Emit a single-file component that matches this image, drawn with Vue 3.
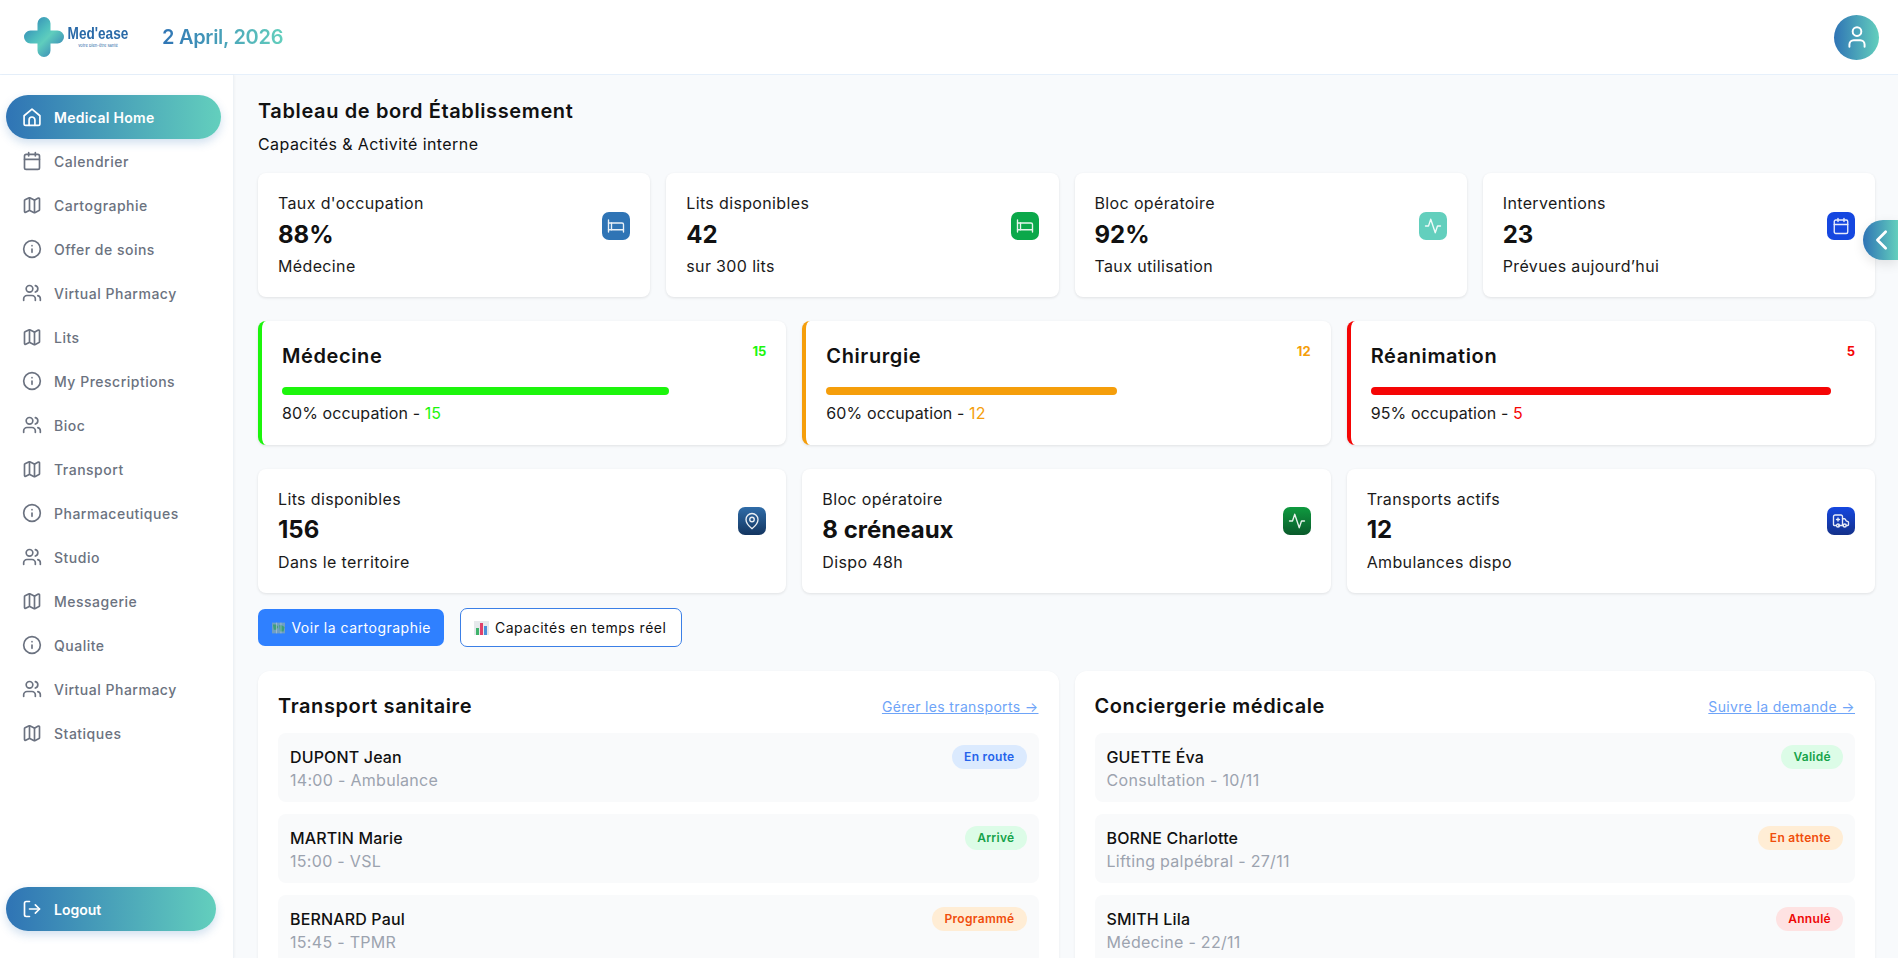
<script setup>
const icons = {
  home: ['M2.5 10.5 12 2.5l9.5 8V20a2 2 0 0 1-2 2h-15a2 2 0 0 1-2-2z', 'M8.5 22v-6.5a3.5 3.5 0 0 1 7 0V22'],
  cal: ['M5 4h14a2 2 0 0 1 2 2v14a2 2 0 0 1-2 2H5a2 2 0 0 1-2-2V6a2 2 0 0 1 2-2z', 'M16 2v4', 'M8 2v4', 'M3 10h18'],
  map: ['M14.1 5.6 9.9 3.5a2 2 0 0 0-1.8 0L3.6 5.7A1 1 0 0 0 3 6.6v13.2a1 1 0 0 0 1.4.9l3.7-1.9a2 2 0 0 1 1.8 0l4.2 2.1a2 2 0 0 0 1.8 0l4.5-2.2a1 1 0 0 0 .6-.9V4.6a1 1 0 0 0-1.4-.9l-3.7 1.9a2 2 0 0 1-1.8 0z', 'M15 5.8v15', 'M9 3.3v15'],
  info: ['M12 2a10 10 0 1 0 0 20 10 10 0 0 0 0-20z', 'M12 16v-4', 'M12 8h.01'],
  users: ['M16 21v-2a4 4 0 0 0-4-4H6a4 4 0 0 0-4 4v2', 'M9 3a4 4 0 1 0 0 8 4 4 0 0 0 0-8z', 'M22 21v-2a4 4 0 0 0-3-3.87', 'M16 3.13a4 4 0 0 1 0 7.75'],
  logout: ['M9 21H5a2 2 0 0 1-2-2V5a2 2 0 0 1 2-2h4', 'M16 17l5-5-5-5', 'M21 12H9'],
  user: ['M19 21v-2a4 4 0 0 0-4-4H9a4 4 0 0 0-4 4v2', 'M12 3a4 4 0 1 0 0 8 4 4 0 0 0 0-8z'],
  bed: ['M2 4v16', 'M2 8h18a2 2 0 0 1 2 2v10', 'M2 17h20', 'M6 8v9'],
  pulse: ['M22 12h-4l-3 9L9 3l-3 9H2'],
  pin: ['M20 10c0 5-5.5 10.2-7.4 11.8a1 1 0 0 1-1.2 0C9.5 20.2 4 15 4 10a8 8 0 0 1 16 0', 'M12 7a3 3 0 1 0 0 6 3 3 0 0 0 0-6z'],
  amb: ['M10 10H6', 'M8 8v4', 'M14 18V6a2 2 0 0 0-2-2H4a2 2 0 0 0-2 2v11a1 1 0 0 0 1 1h2', 'M19 18h2a1 1 0 0 0 1-1v-3.28a1 1 0 0 0-.68-.95l-1.82-.6a1 1 0 0 1-.55-.46L17.6 9.5a1 1 0 0 0-.87-.5H14', 'M8 16a2 2 0 1 0 0 4 2 2 0 0 0 0-4z', 'M17 16a2 2 0 1 0 0 4 2 2 0 0 0 0-4z', 'M9 18h6'],
}
const nav = [
  ['Calendrier', 'cal'], ['Cartographie', 'map'], ['Offer de soins', 'info'], ['Virtual Pharmacy', 'users'],
  ['Lits', 'map'], ['My Prescriptions', 'info'], ['Bioc', 'users'], ['Transport', 'map'],
  ['Pharmaceutiques', 'info'], ['Studio', 'users'], ['Messagerie', 'map'], ['Qualite', 'info'],
  ['Virtual Pharmacy', 'users'], ['Statiques', 'map'],
]
const stats = [
  { label: "Taux d'occupation", value: '88%', sub: 'Médecine', icon: 'bed', cls: 'i-blue' },
  { label: 'Lits disponibles', value: '42', sub: 'sur 300 lits', icon: 'bed', cls: 'i-green' },
  { label: 'Bloc opératoire', value: '92%', sub: 'Taux utilisation', icon: 'pulse', cls: 'i-teal' },
  { label: 'Interventions', value: '23', sub: 'Prévues aujourd’hui', icon: 'cal', cls: 'i-royal' },
]
const depts = [
  { name: 'Médecine', n: 15, pct: 80, color: '#1cf50c' },
  { name: 'Chirurgie', n: 12, pct: 60, color: '#f59e0b' },
  { name: 'Réanimation', n: 5, pct: 95, color: '#f50505' },
]
const terr = [
  { label: 'Lits disponibles', value: '156', sub: 'Dans le territoire', icon: 'pin', cls: 'g-navy' },
  { label: 'Bloc opératoire', value: '8 créneaux', sub: 'Dispo 48h', icon: 'pulse', cls: 'g-green' },
  { label: 'Transports actifs', value: '12', sub: 'Ambulances dispo', icon: 'amb', cls: 'g-blue' },
]
const panels = [
  { title: 'Transport sanitaire', link: 'Gérer les transports →', rows: [
    { name: 'DUPONT Jean', sub: '14:00 - Ambulance', badge: 'En route', cls: 'b-blue' },
    { name: 'MARTIN Marie', sub: '15:00 - VSL', badge: 'Arrivé', cls: 'b-green' },
    { name: 'BERNARD Paul', sub: '15:45 - TPMR', badge: 'Programmé', cls: 'b-orange' },
  ] },
  { title: 'Conciergerie médicale', link: 'Suivre la demande →', rows: [
    { name: 'GUETTE Éva', sub: 'Consultation - 10/11', badge: 'Validé', cls: 'b-green' },
    { name: 'BORNE Charlotte', sub: 'Lifting palpébral - 27/11', badge: 'En attente', cls: 'b-orange' },
    { name: 'SMITH Lila', sub: 'Médecine - 22/11', badge: 'Annulé', cls: 'b-red' },
  ] },
]
</script>

<template>
  <div class="app">
    <header class="top">
      <div class="logo">
        <svg class="cross" width="40" height="40" viewBox="0 0 40 40">
          <defs>
            <linearGradient id="cg" x1="0" y1="0" x2="1" y2="1">
              <stop offset="0" stop-color="#2b78b4" />
              <stop offset=".42" stop-color="#4fbfbe" />
              <stop offset=".55" stop-color="#5fcdbd" />
              <stop offset="1" stop-color="#2b6fb5" />
            </linearGradient>
          </defs>
          <path fill="url(#cg)" d="M13.5 6.5a6.5 6.5 0 0 1 13 0v7h7a6.5 6.5 0 0 1 0 13h-7v7a6.5 6.5 0 0 1-13 0v-7h-7a6.5 6.5 0 0 1 0-13h7z" />
        </svg>
        <div class="logotext">
          <span class="ln">Med'ease</span>
          <span class="lt">votre bien-être santé</span>
        </div>
      </div>
      <div class="date">2 April, 2026</div>
      <div class="avatar">
        <svg width="26" height="26" viewBox="0 0 24 24" fill="none" stroke="#fff" stroke-width="1.8" stroke-linecap="round" stroke-linejoin="round"><path v-for="d in icons.user" :key="d" :d="d" /></svg>
      </div>
    </header>

    <div class="body">
      <aside class="side">
        <nav class="nav">
          <a class="item active">
            <svg class="ic" viewBox="0 0 24 24"><path v-for="d in icons.home" :key="d" :d="d" /></svg>
            <span>Medical Home</span>
          </a>
          <a v-for="(n, i) in nav" :key="i" class="item">
            <svg class="ic" viewBox="0 0 24 24"><path v-for="d in icons[n[1]]" :key="d" :d="d" /></svg>
            <span>{{ n[0] }}</span>
          </a>
        </nav>
        <a class="item logoutb">
          <svg class="ic" viewBox="0 0 24 24"><path v-for="d in icons.logout" :key="d" :d="d" /></svg>
          <span>Logout</span>
        </a>
      </aside>

      <main class="main">
        <h1 class="h1">Tableau de bord Établissement</h1>
        <p class="subt">Capacités &amp; Activité interne</p>

        <section class="grid4">
          <div v-for="s in stats" :key="s.label" class="card stat">
            <div class="col">
              <div class="lab">{{ s.label }}</div>
              <div class="val">{{ s.value }}</div>
              <div class="lab">{{ s.sub }}</div>
            </div>
            <div class="tile" :class="s.cls">
              <svg width="18" height="18" viewBox="0 0 24 24"><path v-for="d in icons[s.icon]" :key="d" :d="d" /></svg>
            </div>
          </div>
        </section>

        <section class="grid3">
          <div v-for="d in depts" :key="d.name" class="card dept" :style="{ borderLeftColor: d.color }">
            <div class="dhead">
              <span class="dname">{{ d.name }}</span>
              <span class="dn" :style="{ color: d.color }">{{ d.n }}</span>
            </div>
            <div class="bar" :style="{ width: d.pct + '%', background: d.color }"></div>
            <div class="lab docc">{{ d.pct }}% occupation - <span :style="{ color: d.color }">{{ d.n }}</span></div>
          </div>
        </section>

        <section class="grid3">
          <div v-for="s in terr" :key="s.label" class="card stat terr">
            <div class="col">
              <div class="lab">{{ s.label }}</div>
              <div class="val">{{ s.value }}</div>
              <div class="lab">{{ s.sub }}</div>
            </div>
            <div class="tile" :class="s.cls">
              <svg width="18" height="18" viewBox="0 0 24 24"><path v-for="d in icons[s.icon]" :key="d" :d="d" /></svg>
            </div>
          </div>
        </section>

        <div class="actions">
          <button class="btn primary">
            <svg width="15" height="14" viewBox="0 0 15 14">
              <rect x="0" y="1" width="15" height="12" fill="#6f9fc4" />
              <path d="M1 3h4l2 3-2 3H2zM8 4h3l3 2-1 5H9z" fill="#3f9f78" />
              <path d="M5 1v12M10 1v12" stroke="#b9c9d6" stroke-width=".7" />
            </svg>
            Voir la cartographie
          </button>
          <button class="btn outline">
            <svg width="15" height="14" viewBox="0 0 15 14">
              <rect x="0" y="0" width="15" height="14" fill="#e6e9ec" />
              <rect x="2" y="7" width="3" height="7" fill="#3fb36b" />
              <rect x="6" y="2" width="3" height="12" fill="#e0406a" />
              <rect x="10" y="5" width="3" height="9" fill="#4a90d9" />
            </svg>
            Capacités en temps réel
          </button>
        </div>

        <section class="grid2">
          <div v-for="p in panels" :key="p.title" class="panel">
            <div class="phead">
              <h2 class="ptitle">{{ p.title }}</h2>
              <a class="plink">{{ p.link }}</a>
            </div>
            <div class="rows">
              <div v-for="r in p.rows" :key="r.name" class="row">
                <div>
                  <div class="rname">{{ r.name }}</div>
                  <div class="rsub">{{ r.sub }}</div>
                </div>
                <span class="badge" :class="r.cls">{{ r.badge }}</span>
              </div>
            </div>
          </div>
        </section>
      </main>
    </div>

    <button class="collapse">
      <svg width="22" height="22" viewBox="0 0 24 24" fill="none" stroke="#fff" stroke-width="3" stroke-linecap="round" stroke-linejoin="round"><path d="M16 3 7 12l9 9" /></svg>
    </button>
  </div>
</template>

<style>
html, body { margin: 0; height: 100%; overflow: hidden; }
</style>

<style scoped>
.app {
  height: 100vh; display: flex; flex-direction: column; overflow: hidden; position: relative;
  font-family: Inter, "Noto Sans", "Liberation Sans", sans-serif; color: #111;
  background: #f8fafc;
}
.top {
  height: 74px; flex: none; background: #fff; border-bottom: 1px solid #e6f0fb;
  display: flex; align-items: center; padding: 0 19px 0 24px;
}
.logo { display: flex; align-items: center; width: 138px; }
.cross { flex: none; }
.logotext { display: flex; flex-direction: column; align-items: center; line-height: 1; margin-top: -2px; margin-left: 3px; width: 62px; }
.ln { font-family: "Liberation Sans", sans-serif; font-weight: 700; font-size: 17px; color: #2a6aa8; transform: scaleX(.8); transform-origin: center; white-space: nowrap; }
.lt { font-size: 4px; color: #2a6aa8; margin-top: 2px; white-space: nowrap; }
.date {
  font-size: 20px; font-weight: 600; letter-spacing: -.3px;
  background: linear-gradient(90deg, #2f74b5, #63cfbd);
  -webkit-background-clip: text; background-clip: text; color: transparent;
}
.avatar {
  margin-left: auto; width: 45px; height: 45px; border-radius: 50%;
  background: linear-gradient(90deg, #2f74b5, #63cfbd);
  display: flex; align-items: center; justify-content: center;
}
.body { flex: 1; display: flex; min-height: 0; }
.side {
  width: 234px; flex: none; background: #fff; box-sizing: border-box;
  border-right: 1px solid #eef2f6; box-shadow: 1px 0 2px rgba(0,0,0,.03);
  padding: 20px 0 27px 6px; display: flex; flex-direction: column; justify-content: space-between;
}
.nav { display: flex; flex-direction: column; }
.item {
  display: flex; align-items: center; gap: 12px; height: 44px; padding-left: 16px; box-sizing: border-box;
  font-size: 14px; font-weight: 500; color: #6b7280; letter-spacing: .5px; width: 215px; border-radius: 22px;
}
.ic { width: 20px; height: 20px; fill: none; stroke: currentColor; stroke-width: 2; stroke-linecap: round; stroke-linejoin: round; flex: none; }
.active, .logoutb {
  color: #fff; font-weight: 600; letter-spacing: .3px;
  background: linear-gradient(90deg, #2f74b5, #63cfbd);
  box-shadow: 0 4px 10px rgba(47,116,181,.22);
}
.logoutb { width: 210px; letter-spacing: 0; }
.main { flex: 1; min-width: 0; padding: 17px 23px 0 24px; overflow: hidden; }
.h1 { margin: 0; font-size: 20px; font-weight: 600; line-height: 38px; letter-spacing: .62px; color: #111; }
.subt { margin: 0; font-size: 16px; line-height: 28px; letter-spacing: .42px; color: #111; }
.grid4 { display: grid; grid-template-columns: repeat(4, 1fr); gap: 16px; margin-top: 15px; }
.grid3 { display: grid; grid-template-columns: repeat(3, 1fr); gap: 16px; margin-top: 24px; }
.card {
  background: #fff; border-radius: 8px; height: 124px; box-sizing: border-box;
  box-shadow: 0 1px 3px rgba(0,0,0,.1);
}
.stat { display: flex; justify-content: space-between; padding: 0 20px; }
.col { display: flex; flex-direction: column; padding-top: 18px; }
.lab { font-size: 16px; line-height: 24px; letter-spacing: .36px; color: #1a1a1a; }
.val { font-size: 24px; font-weight: 700; line-height: 32px; margin: 4px 0 3px; color: #111; }
.terr .val { margin: 3px 0 4px; }
.tile {
  width: 28px; height: 28px; border-radius: 7px; margin-top: 39px; flex: none;
  display: flex; align-items: center; justify-content: center;
}
.terr .tile { margin-top: 38px; }
.tile svg { fill: none; stroke: #fff; stroke-width: 1.8; stroke-linecap: round; stroke-linejoin: round; opacity: .9; }
.i-blue { background: #2f74b5; }
.i-green { background: #0ba84a; }
.i-teal { background: #63cfbd; }
.i-royal { background: #1547e0; }
.g-navy { background: linear-gradient(180deg, #2f6ca8, #133560); }
.g-green { background: linear-gradient(180deg, #0f9a3f, #0a5a2b); }
.g-blue { background: linear-gradient(180deg, #1547e0, #14318a); }
.dept { border-left: 4px solid; padding: 20px 20px 0; }
.dhead { display: flex; justify-content: space-between; align-items: flex-start; height: 46px; }
.dname { font-size: 20px; font-weight: 600; line-height: 30px; letter-spacing: .6px; color: #111; }
.dn { font-size: 13px; font-weight: 700; line-height: 20px; }
.bar { height: 8px; border-radius: 4px; }
.docc { margin-top: 6px; letter-spacing: .1px; }
.actions { display: flex; gap: 16px; margin-top: 15px; align-items: center; }
.btn {
  font: inherit; font-size: 14px; letter-spacing: .5px; border-radius: 7px; display: flex; align-items: center; gap: 6px; padding: 0 13px;
  cursor: pointer; box-sizing: border-box; white-space: nowrap;
}
.primary { height: 37px; width: 186px; background: #2f80ff; color: #fff; border: 0; padding-left: 14px; }
.outline { height: 39px; width: 222px; background: #fff; color: #111; border: 1px solid #3b7fe6; }
.grid2 { display: grid; grid-template-columns: 1fr 1fr; gap: 16px; margin-top: 24px; }
.panel {
  background: #fff; border-radius: 12px; padding: 20px; box-shadow: 0 1px 3px rgba(0,0,0,.06);
}
.phead { display: flex; justify-content: space-between; align-items: center; height: 30px; margin-bottom: 12px; }
.ptitle { margin: 0; font-size: 20px; font-weight: 600; letter-spacing: .6px; color: #111; }
.plink { font-size: 14px; letter-spacing: .35px; color: #6ea4f8; text-decoration: underline; }
.rows { display: flex; flex-direction: column; gap: 12px; }
.row {
  height: 69px; box-sizing: border-box; background: #f9fafb; border-radius: 8px; padding: 12px;
  display: flex; justify-content: space-between; align-items: flex-start;
}
.rname { font-size: 16px; line-height: 24px; color: #111; font-weight: 500; letter-spacing: .15px; }
.rsub { font-size: 16px; line-height: 22px; color: #9ca3af; letter-spacing: .3px; }
.badge { height: 24px; line-height: 24px; padding: 0 12px; border-radius: 12px; font-size: 12px; font-weight: 600; letter-spacing: .3px; }
.b-blue { background: #dbeafe; color: #2563eb; }
.b-green { background: #dcfce7; color: #16a34a; }
.b-orange { background: #ffedd5; color: #f04e0c; }
.b-red { background: #fee2e2; color: #ee0606; }
.collapse {
  position: absolute; right: 0; top: 220px; width: 35px; height: 40px; border: 0; padding: 0 0 0 2px;
  border-radius: 20px 0 0 20px; display: flex; align-items: center; justify-content: center;
  background: linear-gradient(90deg, #2f74b5, #63cfbd); box-shadow: 0 4px 12px rgba(0,0,0,.1);
}
</style>
